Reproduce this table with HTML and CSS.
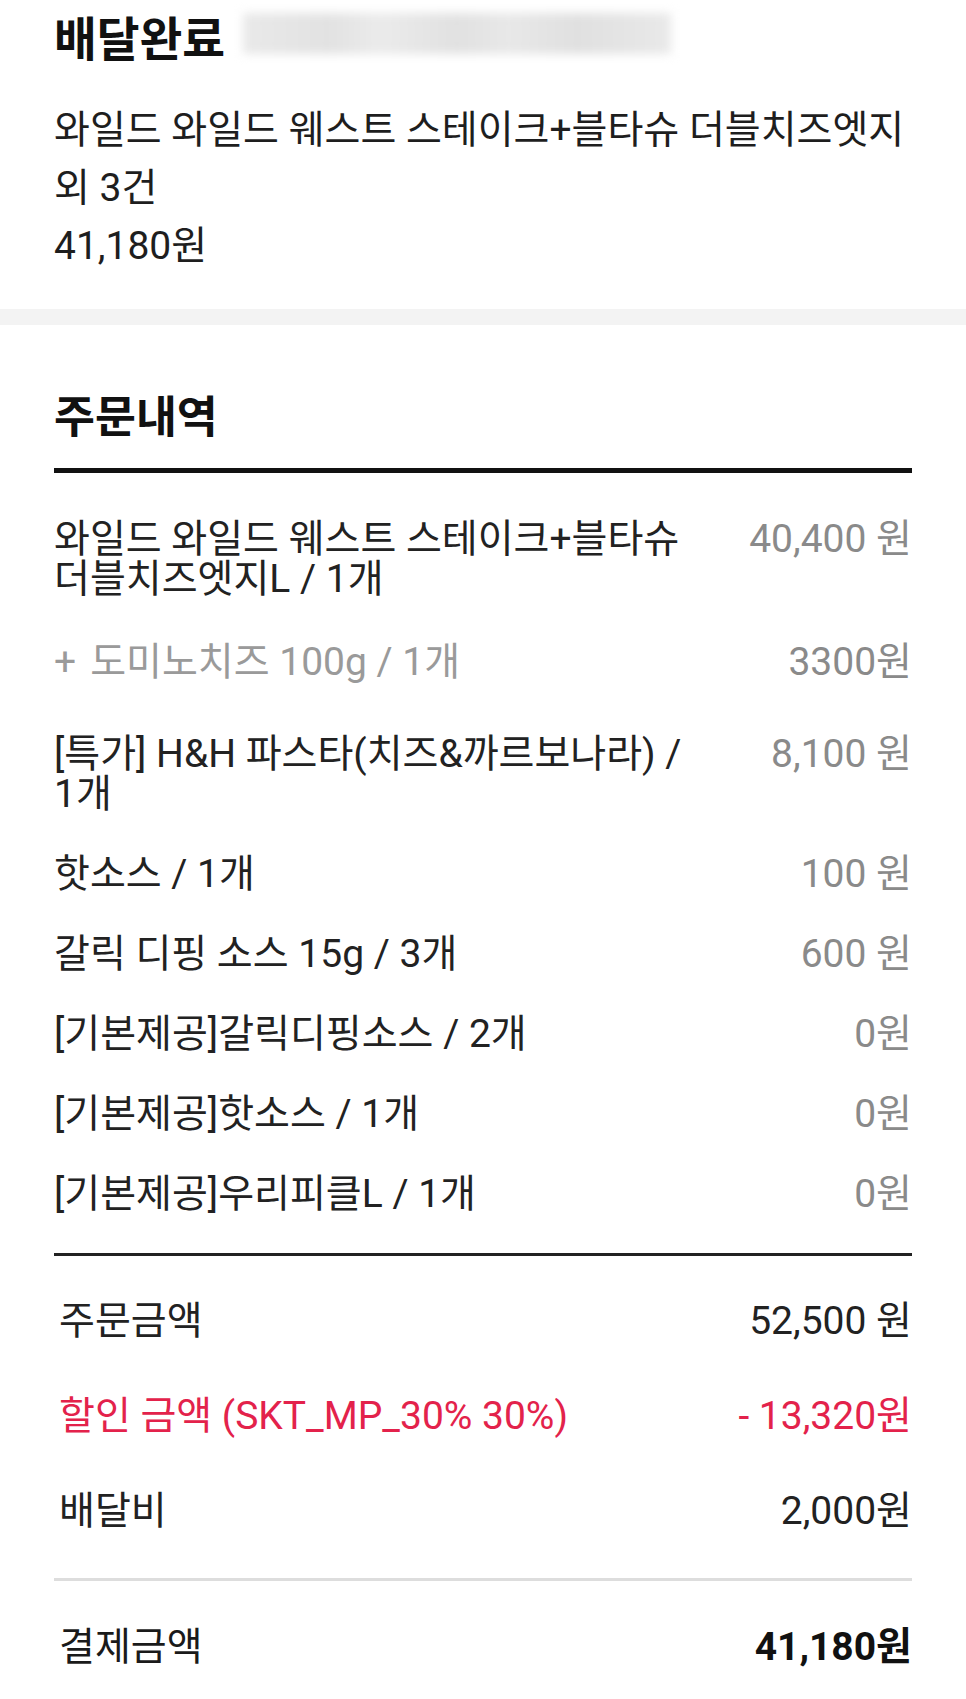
FILE: index.html
```html
<!DOCTYPE html>
<html lang="ko">
<head>
<meta charset="utf-8">
<title>주문내역</title>
<link rel="stylesheet" href="styles.css">
</head>
<body>
<header class="top">
  <div class="status-row">
    <h1 class="status">배달완료</h1>
    <div class="blur" aria-hidden="true"></div>
  </div>
  <p class="order-name">와일드 와일드 웨스트 스테이크+블타슈 더블치즈엣지 외 3건</p>
  <p class="order-total">41,180원</p>
</header>
<div class="band"></div>
<section class="detail">
  <h2 class="section-title">주문내역</h2>
  <div class="rule-thick"></div>
  <ul class="items">
    <li class="item">
      <div class="line">
        <span class="name">와일드 와일드 웨스트 스테이크+블타슈 더블치즈엣지L / 1개</span>
        <span class="price">40,400 원</span>
      </div>
      <div class="line option">
        <span class="name"><span class="plus">+</span>도미노치즈 100g / 1개</span>
        <span class="price">3300원</span>
      </div>
    </li>
    <li class="item">
      <div class="line">
        <span class="name">[특가] H&amp;H 파스타(치즈&amp;까르보나라) / 1개</span>
        <span class="price">8,100 원</span>
      </div>
    </li>
    <li class="item">
      <div class="line">
        <span class="name">핫소스 / 1개</span>
        <span class="price">100 원</span>
      </div>
    </li>
    <li class="item">
      <div class="line">
        <span class="name">갈릭 디핑 소스 15g / 3개</span>
        <span class="price">600 원</span>
      </div>
    </li>
    <li class="item">
      <div class="line">
        <span class="name">[기본제공]갈릭디핑소스 / 2개</span>
        <span class="price">0원</span>
      </div>
    </li>
    <li class="item">
      <div class="line">
        <span class="name">[기본제공]핫소스 / 1개</span>
        <span class="price">0원</span>
      </div>
    </li>
    <li class="item">
      <div class="line">
        <span class="name">[기본제공]우리피클L / 1개</span>
        <span class="price">0원</span>
      </div>
    </li>
  </ul>
  <div class="rule-mid"></div>
  <div class="sums">
    <div class="sum-row">
      <span class="label">주문금액</span>
      <span class="amount">52,500 원</span>
    </div>
    <div class="sum-row discount">
      <span class="label">할인 금액 (SKT_MP_30% 30%)</span>
      <span class="amount">- 13,320원</span>
    </div>
    <div class="sum-row">
      <span class="label">배달비</span>
      <span class="amount">2,000원</span>
    </div>
  </div>
  <div class="rule-light"></div>
  <div class="sum-row total">
    <span class="label">결제금액</span>
    <span class="amount">41,180원</span>
  </div>
</section>
</body>
</html>
```
FILE: styles.css
```css
* { box-sizing: border-box; }

html, body {
  margin: 0;
  padding: 0;
  background: #ffffff;
}

body {
  width: 966px;
  font-family: Roboto, "Noto Sans CJK KR", sans-serif;
  color: #222222;
  word-break: keep-all;
}

.top {
  padding: 13px 54px 34px;
}

.status-row {
  display: flex;
  align-items: flex-start;
  gap: 18px;
  height: 50.5px;
}

.status {
  margin: 4px 0 0;
  font-size: 46.5px;
  line-height: 46.5px;
  font-weight: 700;
  color: #111111;
  white-space: nowrap;
}

.blur {
  width: 428px;
  height: 41px;
  background: linear-gradient(90deg, #e9e9e9 0%, #e2e2e2 20%, #ebebeb 32%, #e1e1e1 50%, #e8e8e8 62%, #e0e0e0 78%, #e9e9e9 100%);
  filter: blur(5px);
}

.order-name,
.order-total {
  margin: 0;
  font-size: 39px;
  line-height: 58px;
  color: #1e1e1e;
}

.order-name {
  margin-top: 37.8px;
}

.band {
  height: 16px;
  background: #f3f3f3;
}

.detail {
  padding: 71px 54px 0;
}

.section-title {
  margin: 0;
  font-size: 44.5px;
  line-height: 44.5px;
  font-weight: 700;
  color: #111111;
}

.rule-thick {
  height: 5px;
  margin-top: 27.5px;
  background: #111111;
}

.items {
  list-style: none;
  margin: 26px 0 0;
  padding: 0;
}

.item {
  padding: 20px 0;
}

.line {
  display: flex;
  align-items: flex-start;
  font-size: 39px;
  line-height: 40px;
}

.name {
  flex: 1;
  min-width: 0;
}

.price {
  width: 200px;
  text-align: right;
  white-space: nowrap;
  color: #8a8a8a;
}

.option {
  margin-top: 43px;
  margin-bottom: 12px;
  color: #9a9a9a;
}

.plus {
  display: inline-block;
  margin-right: 14px;
}

.rule-mid {
  height: 3px;
  margin-top: 19px;
  background: #222222;
}

.sums {
  display: flex;
  flex-direction: column;
  gap: 56px;
  padding-top: 46px;
}

.sum-row {
  display: flex;
  justify-content: space-between;
  font-size: 39px;
  line-height: 39px;
  color: #222222;
}

.sum-row .label {
  padding-left: 5px;
}

.sum-row .amount {
  white-space: nowrap;
}

.discount {
  color: #e3224b;
}

.rule-light {
  height: 3px;
  margin-top: 47px;
  background: #dddddd;
}

.total {
  margin-top: 47px;
  color: #1a1a1a;
}

.total .amount {
  font-weight: 700;
  color: #111111;
}
```
